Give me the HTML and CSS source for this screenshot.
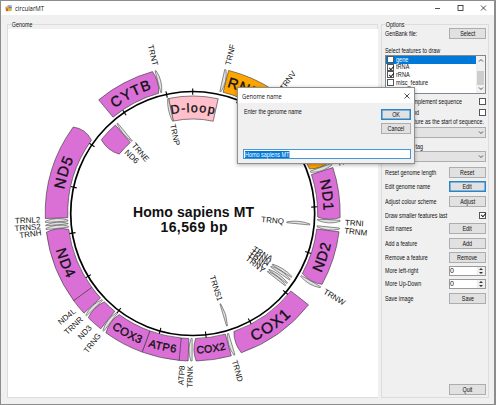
FILE: index.html
```html
<!DOCTYPE html>
<html lang="en">
<head>
<meta charset="utf-8">
<title>circularMT</title>
<link rel="stylesheet" href="styles.css">
</head>
<body>
<div class="window">
  <header class="titlebar">
    <svg class="app-icon" viewBox="0 0 8 8"><rect x="3" y="0.5" width="4.6" height="4" fill="#4d79b8"/><rect x="0.5" y="1.8" width="4" height="3" fill="#e9a72c"/><rect x="1" y="4" width="3" height="3" fill="#c9622c"/><rect x="4" y="3.5" width="3.5" height="3.5" fill="#d9b44a"/><path d="M4 1.5h3" stroke="#fff" stroke-width=".6"/></svg>
    <span class="app-name">circularMT</span>
    <svg class="caption" viewBox="0 0 56 10"><path d="M2 5.500h5M48 2.500l5 5M53 2.500l-5 5" /><rect x="25" y="2.500" width="5" height="5"/></svg>
  </header>
  <main class="content">
    <fieldset class="group genome"><legend>Genome</legend>
      <svg id="map" class="map" viewBox="8 29 370 368"></svg>
    </fieldset>
    <fieldset class="group options"><legend>Options</legend>
      <div class="form">
        <div class="row"><span>GenBank file:</span><button><span>Select</span></button></div>
        <div class="row low"><span>Select features to draw</span></div>
        <div class="list">
          <ul>
            <li class="active"><i class="check"></i><span>gene</span></li>
            <li><i class="check on"></i><span>tRNA</span></li>
            <li><i class="check on"></i><span>rRNA</span></li>
            <li><i class="check"></i><span>misc_feature</span></li>
            <li><i class="check"></i><span>CDS</span></li>
          </ul>
          <div class="scroll"><svg viewBox="0 0 8 5"><path d="M2 3.500l2-2l2 2"/></svg><b></b><svg viewBox="0 0 8 5"><path d="M2 1.500l2 2l2-2"/></svg></div>
        </div>
        <div class="row"><span class="until complement">Reverse complement sequence</span><i class="check"></i></div>
        <div class="row"><span class="until strand">Reverse strand</span><i class="check"></i></div>
        <div class="row"><span class="until start">Set feature as the start of sequence.</span></div>
        <div class="combo"><svg viewBox="0 0 8 5"><path d="M2 1.500l2 2l2-2"/></svg></div>
        <div class="row low"><span class="until tag-name">Feature tag</span></div>
        <div class="combo"><svg viewBox="0 0 8 5"><path d="M2 1.500l2 2l2-2"/></svg></div>
        <div></div>
        <div class="row"><span>Reset genome length</span><button><span>Reset</span></button></div>
        <div class="row"><span>Edit genome name</span><button class="focus"><span>Edit</span></button></div>
        <div class="row"><span>Adjust colour scheme</span><button><span>Adjust</span></button></div>
        <div class="row"><span>Draw smaller features last</span><i class="check on"></i></div>
        <div class="row"><span>Edit names</span><button><span>Edit</span></button></div>
        <div class="row"><span>Add a feature</span><button><span>Add</span></button></div>
        <div class="row"><span>Remove a feature</span><button><span>Remove</span></button></div>
        <div class="row"><span>More left-right</span><div class="spin"><span>0</span><svg viewBox="0 0 7 8"><path d="M1.500 3h4l-2-2zM1.500 5h4l-2 2z"/></svg></div></div>
        <div class="row"><span>More Up-Down</span><div class="spin"><span>0</span><svg viewBox="0 0 7 8"><path d="M1.500 3h4l-2-2zM1.500 5h4l-2 2z"/></svg></div></div>
        <div class="row"><span>Save image</span><button><span>Save</span></button></div>
        <div></div>
        <div class="row"><span></span><button><span>Quit</span></button></div>
      </div>
    </fieldset>
  </main>
  <section class="dialog">
    <header><span>Genome name</span><svg viewBox="0 0 6 6"><path d="M.5.500l5 5M5.500.500l-5 5"/></svg></header>
    <div class="dialog-body">
      <div class="prompt"><span>Enter the genome name</span><div class="actions"><button class="focus"><span>OK</span></button><button><span>Cancel</span></button></div></div>
      <div class="field"><mark>Homo sapiens MT</mark></div>
    </div>
  </section>
</div>
<script src="map.js"></script>
</body>
</html>
```
FILE: styles.css
```css
* { box-sizing: border-box; }
body { margin: 0; font: 7px/9px "Liberation Sans", Arial, sans-serif; color: #111; }
.window { position: relative; width: 496px; height: 405px; overflow: hidden; display: flex; flex-direction: column; background: #f0f0f0; border: 1px solid #8d8d8d; border-right-width: 2px; }
.titlebar { height: 14px; flex: none; display: flex; align-items: center; gap: 3px; padding-left: 4px; background: #fff; }
.app-icon { width: 7px; height: 7px; }
.app-name { font: 7.6px/10px "Open Sans", sans-serif; letter-spacing: -.1px; transform: scaleX(.8); transform-origin: left; }
.caption { width: 56px; height: 10px; margin-left: auto; margin-right: 5px; fill: none; stroke: #222; stroke-width: .8; }
.content { flex: 1; display: flex; gap: 3px; padding: 9px 5px 6px 6px; min-height: 0; }
.group { position: relative; margin: 0; padding: 0; border: 1px solid #dcdcdc; min-width: 0; }
.group legend { position: absolute; top: -5px; left: 3px; padding: 0 1px; background: #f0f0f0; line-height: 9px; white-space: nowrap; transform: scaleX(.77); transform-origin: left; }
.genome { width: 371px; padding-top: 4px; }
.map { display: block; width: 370px; height: 368px; background: #fff; }
.options { flex: 1; padding: 1px 3px 0; }
.form { display: grid; grid-template-columns: 101px; grid-template-rows: 14px 15px 39px 14px 8px 11px 11px 13px 11px 3px 14.5px 14.5px 14px 14px 13.500px 15px 13.500px 13px 13px 16px 1fr 15px; height: 371px; }
.row { display: flex; align-items: center; justify-content: space-between; min-height: 0; white-space: nowrap; }
.row > span { min-width: 0; transform: scaleX(.77); transform-origin: left; }
.low { align-items: flex-end; }
.row > .until { display: flex; justify-content: flex-end; transform-origin: right; }
.complement { width: 77px; }
.strand { width: 34px; }
.start { width: 99px; }
.tag-name { width: 38px; }
button { flex: none; width: 37px; height: 11px; padding: 0; border: 1px solid #adadad; background: #e1e1e1; font: inherit; line-height: 9px; color: #111; }
button span { display: inline-block; transform: scaleX(.77); }
button.focus { border-color: #2b83c8; box-shadow: inset 0 0 0 .5px #2b83c8; }
.check { flex: none; display: block; width: 7px; height: 7px; border: 1px solid #555; background: #fff; }
.on::after { content: ""; display: block; width: 4px; height: 2px; margin: .8px 0 0 .7px; border: solid #222; border-width: 0 0 .8px .8px; transform: rotate(-48deg); }
.list { display: flex; width: 101px; border: 1px solid #828790; background: #fff; overflow: hidden; }
.list ul { flex: 1; margin: 0; padding: 0; list-style: none; }
.list li { display: flex; align-items: center; gap: 2px; height: 7.600px; padding-left: 1px; line-height: 8px; }
.list li span { transform: scaleX(.8); transform-origin: left; }
.list .active { color: #fff; background: #0078d7; }
.scroll { width: 9px; display: flex; flex-direction: column; justify-content: space-between; align-items: center; padding: 2px 0; background: #f0f0f0; }
.scroll svg { width: 8px; height: 5px; }
.scroll b { width: 7px; height: 14px; margin-top: 6px; background: #cdcdcd; }
.scroll path, .combo path { fill: none; stroke: #444; stroke-width: .9; }
.combo { display: flex; align-items: center; justify-content: flex-end; border: 1px solid #adadad; background: #e3e3e3; }
.combo svg { width: 8px; height: 5px; }
.spin { flex: none; width: 37px; height: 10px; display: flex; justify-content: space-between; border: 1px solid #999; background: #fff; line-height: 8px; }
.spin svg { width: 8px; height: 8px; background: #eee; fill: #333; }
.dialog { position: absolute; left: 236px; top: 86px; width: 178px; height: 77px; display: flex; flex-direction: column; border: 1px solid #8f8f8f; background: #f0f0f0; box-shadow: 0 1px 4px rgba(0,0,0,.3); }
.dialog header { height: 15px; display: flex; align-items: center; justify-content: space-between; padding: 0 4px; background: #fff; font: 7.2px/10px "Open Sans", sans-serif; }
.dialog header span { transform: scaleX(.8); transform-origin: left; }
.dialog header svg { width: 6px; height: 6px; fill: none; stroke: #222; stroke-width: .8; }
.dialog-body { flex: 1; display: flex; flex-direction: column; justify-content: space-between; padding: 6px 3px 4px 5px; }
.prompt { display: flex; justify-content: space-between; padding-left: 1px; }
.prompt > span { margin-top: -2px; transform: scaleX(.77); transform-origin: left; }
.prompt button { width: 30px; }
.actions { display: flex; flex-direction: column; gap: 3px; }
.field { width: 168px; height: 10px; border: 1px solid #4298d8; background: #fff; line-height: 8px; padding-left: 1px; }
.field mark { display: inline-block; height: 7px; line-height: 7px; background: #0078d7; color: #fff; vertical-align: top; margin-top: .5px; transform: scaleX(.78); transform-origin: left; }
.map text { font-family: "Liberation Sans", Arial, sans-serif; fill: #111; }
.map .tag { font-size: 8px; }
.map .title { font-size: 14px; font-weight: bold; text-anchor: middle; }
.map .arc-label { text-anchor: middle; stroke: #111; stroke-width: .35; }
.backbone { fill: none; stroke: #000; stroke-width: 1.700; }
.tick { stroke: #000; stroke-width: 1.1; }
.feature { stroke: #333; stroke-width: .6; }
.trna { fill: #e2e2e2; stroke: #444; stroke-width: .6; }
.cds { fill: #da70d6; }
.rrna { fill: #ffa500; }
.dloop { fill: #ffc0cb; }
```
FILE: map.js
```js
const NS = "http://www.w3.org/2000/svg";
const map = document.getElementById("map");
const CX = 192.7, CY = 213.5, LENGTH = 16569;
const deg = bp => bp * 360 / LENGTH;
const point = (a, r) => {
  const t = a * Math.PI / 180;
  return [(CX + r * Math.sin(t)).toFixed(2), (CY - r * Math.cos(t)).toFixed(2)];
};
function add(name, attrs, text, parent = map) {
  const el = document.createElementNS(NS, name);
  for (const k in attrs) el.setAttribute(k, attrs[k]);
  if (text) el.textContent = text;
  parent.appendChild(el);
  return el;
}
// name, start, end, class, inner ring, arc label size and letter spacing
const features = [
  ["RNR1", 648, 1601, "rrna", 0, 14.5, 0.8], ["RNR2", 1671, 3229, "rrna", 0, 14.5, 0.8],
  ["ND1", 3307, 4262, "cds", 0, 14.5, 0.6], ["ND2", 4470, 5511, "cds", 0, 14.5, 0.8],
  ["COX1", 5904, 7445, "cds", 0, 15.5, 1], ["COX2", 7586, 8269, "cds", 0, 10.5, 0.3],
  ["ATP8", 8366, 8572, "cds", 0], ["ATP6", 8527, 9207, "cds", 0, 11, 0.6],
  ["COX3", 9207, 9990, "cds", 0, 11.5, 0.4], ["ND3", 10059, 10404, "cds", 0],
  ["ND4L", 10470, 10766, "cds", 0], ["ND4", 10760, 12137, "cds", 0, 14.5, 0.8],
  ["ND5", 12337, 14148, "cds", 0, 15, 1], ["ND6", 14149, 14673, "cds", 1],
  ["CYTB", 14747, 15887, "cds", 0, 14.5, 1], ["D-loop", 16024, 17145, "dloop", 1, 12.5, 1.2],
  ["TRNF", 577, 647, "trna", 0], ["TRNV", 1602, 1670, "trna", 0],
  ["TRNL1", 3230, 3304, "trna", 0], ["TRNI", 4263, 4331, "trna", 0],
  ["TRNQ", 4329, 4400, "trna", 1], ["TRNM", 4402, 4469, "trna", 0],
  ["TRNW", 5512, 5579, "trna", 0], ["TRNA", 5587, 5655, "trna", 1],
  ["TRNN", 5657, 5729, "trna", 1], ["TRNC", 5761, 5826, "trna", 1],
  ["TRNY", 5826, 5891, "trna", 1], ["TRNS1", 7446, 7514, "trna", 1],
  ["TRND", 7518, 7585, "trna", 0], ["TRNK", 8295, 8364, "trna", 0],
  ["TRNG", 9991, 10058, "trna", 0], ["TRNR", 10405, 10469, "trna", 0],
  ["TRNH", 12138, 12206, "trna", 0], ["TRNS2", 12207, 12265, "trna", 0],
  ["TRNL2", 12266, 12336, "trna", 0], ["TRNE", 14674, 14742, "trna", 1],
  ["TRNT", 15888, 15953, "trna", 0], ["TRNP", 15956, 16023, "trna", 1]
];
// labels nudged apart where neighbours are tight
const labelAngle = { TRNH: 262.8, TRNS2: 265.2, TRNL2: 267.7, TRNA: 120, TRNN: 123, TRNC: 126, TRNY: 129 };

add("circle", { cx: CX, cy: CY, r: 122, class: "backbone" });
for (let bp = 0; bp < LENGTH; bp += 1000) {
  const [x1, y1] = point(deg(bp), 118.7), [x2, y2] = point(deg(bp), 125);
  add("line", { x1, y1, x2, y2, class: "tick" });
}
for (const [name, from, to, kind, inner, size, spacing] of features) {
  const a = deg(from), b = deg(to);
  const ro = inner ? 117.5 : 147.5, ri = inner ? 94.5 : 125, rm = (ro + ri) / 2;
  const back = inner && kind !== "dloop";
  const s = back ? b : a, e = back ? a : b, d = back ? -1 : 1;
  const cut = kind === "dloop" || name === "ATP6" || name === "ND4L" ? 0 : name === "ND5" || name === "ND6" ? 1.5 : 1;
  const flat = e - d * cut;
  const tip = e + d * cut * .7;
  const sweep = back ? 0 : 1;
  add("path", {
    d: `M${point(s, ri)} L${point(s, ro)} A${ro} ${ro} 0 0 ${sweep} ${point(flat, ro)} Q${point(tip, rm)} ${point(flat, ri)} A${ri} ${ri} 0 0 ${1 - sweep} ${point(s, ri)}Z`,
    class: "feature " + kind
  });
  const mid = (a + b) / 2;
  if (size) {
    const m = mid % 360, lower = m > 90 && m < 270;
    const r = rm + (lower ? 1 : -1) * size * .36;
    const [p, q] = lower ? [mid + 20, mid - 20] : [mid - 20, mid + 20];
    add("path", { id: "arc-" + name, fill: "none", d: `M${point(p, r)} A${r} ${r} 0 0 ${lower ? 0 : 1} ${point(q, r)}` });
    const t = add("text", { class: "arc-label", "font-size": size, "letter-spacing": spacing });
    add("textPath", { href: "#arc-" + name, startOffset: "50%" }, name, t);
  } else {
    const la = labelAngle[name] || mid, left = la > 180;
    const [x, y] = point(la, inner ? 91.5 : 152.5);
    add("text", {
      class: "tag", dy: 2.8, "text-anchor": left !== !!inner ? "end" : "start",
      transform: `translate(${x} ${y}) rotate(${(la + (left ? 90 : -90)).toFixed(2)})`
    }, name);
  }
}
add("text", { x: 193.5, y: 216.700, class: "title", textLength: 121 }, "Homo sapiens MT");
add("text", { x: 194, y: 231.500, class: "title", textLength: 67 }, "16,569 bp");
```
